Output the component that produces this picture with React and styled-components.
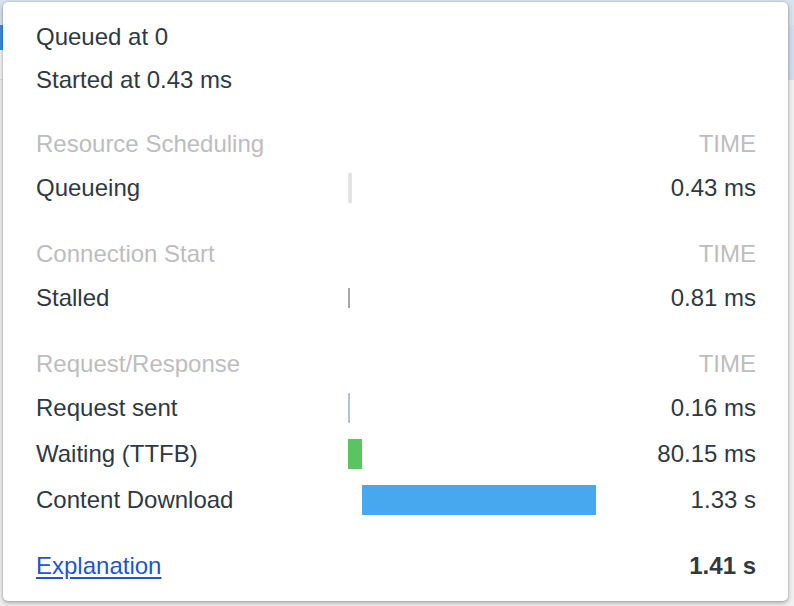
import React from "react";
import styled, { createGlobalStyle } from "styled-components";

const GlobalStyle = createGlobalStyle`
  html, body {
    margin: 0;
    padding: 0;
    background: #ffffff;
  }
  body {
    font-family: "Liberation Sans", Arial, sans-serif;
  }
`;

const Page = styled.div`
  position: relative;
  width: 794px;
  height: 606px;
  overflow: hidden;
  background: #f3f3f3;
`;

const Backdrop = styled.div`
  display: grid;
  grid-template-rows: 25px 25px 30px 1fr;
  height: 100%;
`;

const BackRow = styled.div`
  background: ${(p) => p.$bg};
  border-bottom: 1px solid ${(p) => p.$line || "transparent"};
`;

const Popover = styled.div`
  position: absolute;
  left: 3px;
  top: 2px;
  width: 785px;
  height: 599px;
  box-sizing: border-box;
  padding: 13px 32px 0 33px;
  background: #ffffff;
  border-radius: 5px;
  box-shadow: 0 0 0 1px rgba(0, 0, 0, 0.06), 0 2px 5px rgba(0, 0, 0, 0.3);
  color: #303942;
  font-size: 24px;
`;

const Summary = styled.div`
  height: 43px;
  display: flex;
  align-items: center;
  white-space: nowrap;
`;

const Table = styled.div`
  display: grid;
  grid-template-columns: 312px 248px 1fr;
`;

const Header = styled.div`
  grid-column: ${(p) => (p.$right ? "3" : "1 / 3")};
  height: 42px;
  margin-top: 22px;
  display: flex;
  align-items: center;
  justify-content: ${(p) => (p.$right ? "flex-end" : "flex-start")};
  color: #bdbdbd;
  white-space: nowrap;
`;

const Label = styled.div`
  height: 46px;
  display: flex;
  align-items: center;
  white-space: nowrap;
`;

const Value = styled.div`
  height: 46px;
  display: flex;
  align-items: center;
  justify-content: flex-end;
  white-space: nowrap;
  font-weight: ${(p) => (p.$bold ? 700 : 400)};
`;

const Track = styled.div`
  position: relative;
  height: 46px;
`;

const Bar = styled.div`
  position: absolute;
  top: 50%;
  height: ${(p) => p.$h || 30}px;
  transform: translateY(-50%);
  background: ${(p) => p.$color};
`;

const Footer = styled.div`
  grid-column: 1 / 3;
  height: 46px;
  margin-top: 20px;
  display: flex;
  align-items: center;
`;

const Link = styled.a`
  color: #1f56cc;
  text-decoration: underline;
  text-underline-offset: 3px;
  cursor: pointer;
`;

const FooterValue = styled(Value)`
  margin-top: 20px;
`;

const TOTAL = 1410;
const TRACK = 248;

const sections = [
  {
    title: "Resource Scheduling",
    rows: [{ label: "Queueing", start: 0, dur: 0.43, value: "0.43 ms", color: "#e3e3e3", min: 4 }],
  },
  {
    title: "Connection Start",
    rows: [{ label: "Stalled", start: 0.43, dur: 0.81, value: "0.81 ms", color: "#a8a8a8", min: 2, h: 20 }],
  },
  {
    title: "Request/Response",
    rows: [
      { label: "Request sent", start: 1.24, dur: 0.16, value: "0.16 ms", color: "#b6c0c7", min: 2 },
      { label: "Waiting (TTFB)", start: 1.4, dur: 80.15, value: "80.15 ms", color: "#5ac463", min: 2 },
      { label: "Content Download", start: 81.55, dur: 1330, value: "1.33 s", color: "#47a8ef", min: 2 },
    ],
  },
];

function TimingBar({ row }) {
  const left = Math.round((row.start / TOTAL) * TRACK);
  const width = Math.max(row.min, Math.round((row.dur / TOTAL) * TRACK));
  return (
    <Track>
      <Bar $color={row.color} $h={row.h} style={{ left, width }} />
    </Track>
  );
}

export default function App() {
  return (
    <>
      <GlobalStyle />
      <Page>
        <Backdrop>
          <BackRow $bg="#d9e3ee" />
          <BackRow $bg="linear-gradient(90deg, #3b8dd8 0 40px, #cfdeef 40px)" />
          <BackRow $bg="linear-gradient(90deg, #f5f5f5 0 760px, #cfdeef 760px)" $line="#dddddd" />
          <BackRow $bg="#f1f1f1" />
        </Backdrop>
        <Popover>
          <Summary>Queued at 0</Summary>
          <Summary>Started at 0.43 ms</Summary>
          <Table>
            {sections.map((s) => (
              <React.Fragment key={s.title}>
                <Header>{s.title}</Header>
                <Header $right>TIME</Header>
                {s.rows.map((r) => (
                  <React.Fragment key={r.label}>
                    <Label>{r.label}</Label>
                    <TimingBar row={r} />
                    <Value>{r.value}</Value>
                  </React.Fragment>
                ))}
              </React.Fragment>
            ))}
            <Footer>
              <Link>Explanation</Link>
            </Footer>
            <FooterValue $bold>1.41 s</FooterValue>
          </Table>
        </Popover>
      </Page>
    </>
  );
}
